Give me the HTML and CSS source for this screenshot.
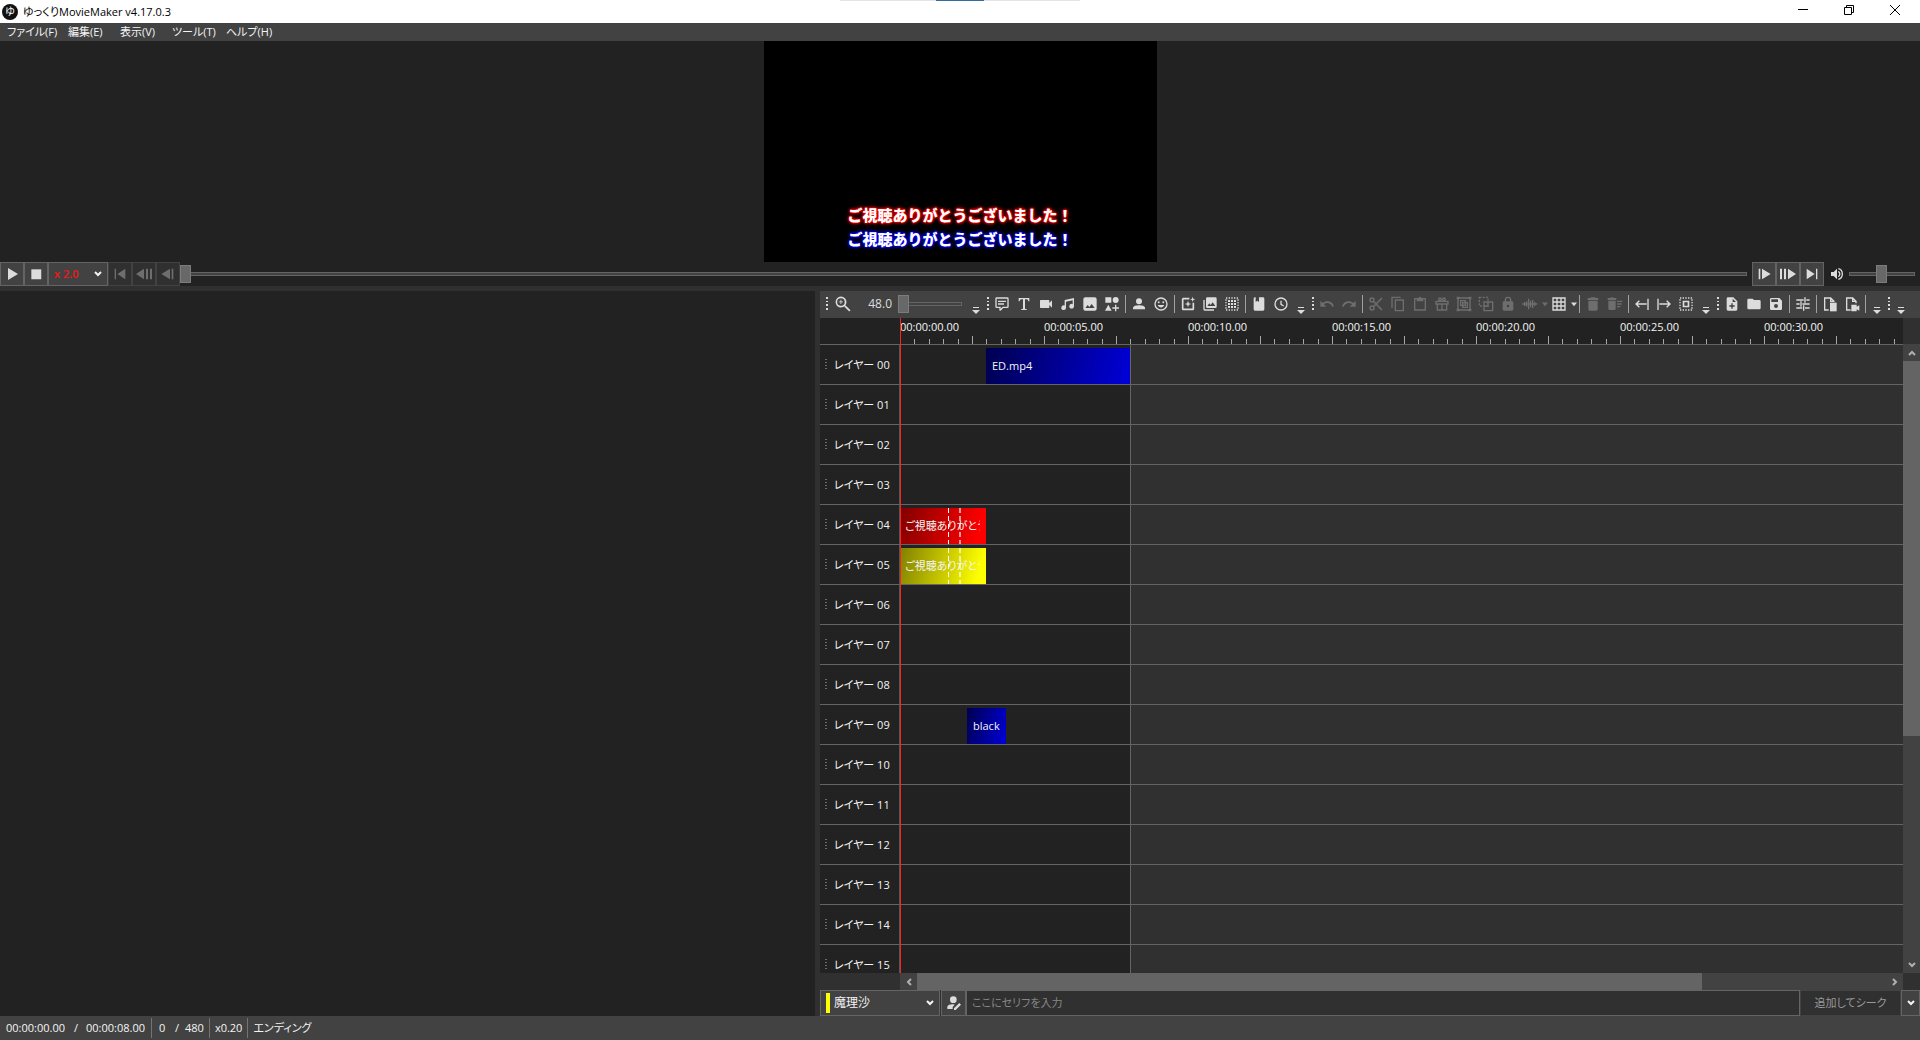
FILE: index.html
```html
<!DOCTYPE html>
<html lang="ja">
<head>
<meta charset="utf-8">
<title>ゆっくりMovieMaker v4.17.0.3</title>
<link rel="stylesheet" href="styles.css">
</head>
<body>
<svg class="defs" aria-hidden="true">
  <symbol id="i-down" viewBox="0 0 8 8"><path d="M1 2l3 3 3-3" fill="none" stroke="currentColor" stroke-width="2"/></symbol>
  <symbol id="i-more" viewBox="0 0 8 8"><path d="M1 0h6v1H1zM0 3h8L4 7z"/></symbol>
  <symbol id="i-grip" viewBox="0 0 4 16"><path d="M1 1h2v2H1zM1 5h2v1H1zM1 8h2v2H1zM1 12h2v2H1z"/></symbol>
  <symbol id="i-zoom" viewBox="0 0 24 24"><path d="M15.500 14L14.700 13.700A6.500 6.500 0 1 0 13.700 14.700L14 15.500L19.500 21L21 19.500ZM9.500 14A4.500 4.500 0 1 1 9.500 5A4.500 4.500 0 0 1 9.500 14ZM9 7v2H7v1h2v2h1v-2h2V9h-2V7z" fill-rule="evenodd"/></symbol>
  <symbol id="i-chat" viewBox="0 0 24 24"><path d="M9 22a1 1 0 0 1-1-1v-3H4a2 2 0 0 1-2-2V4a2 2 0 0 1 2-2h16a2 2 0 0 1 2 2v12a2 2 0 0 1-2 2h-6l-4 4zM4 4v12h6v3l3-3h7V4zM6 7h12v2H6zM6 11h9v2H6z" fill-rule="evenodd"/></symbol>
  <symbol id="i-text" viewBox="0 0 24 24"><path d="M4 3h16v5h-1.500C18 5.500 17 5 13.500 5v13c0 1.500.5 2 3 2v1h-9v-1c2.500 0 3-.5 3-2V5C7 5 6 5.500 5.500 8H4z"/></symbol>
  <symbol id="i-video" viewBox="0 0 24 24"><path d="M17 10.500V7a1 1 0 0 0-1-1H4a1 1 0 0 0-1 1v10a1 1 0 0 0 1 1h12a1 1 0 0 0 1-1v-3.500l4 4v-11z"/></symbol>
  <symbol id="i-music" viewBox="0 0 24 24"><path d="M21 3v12.500a3.500 3.500 0 1 1-2-3.200V6.500L9 8.600v8.900a3.500 3.500 0 1 1-2-3.200V6z"/></symbol>
  <symbol id="i-image" viewBox="0 0 24 24"><path fill-rule="evenodd" d="M2 5a3 3 0 0 1 3-3h14a3 3 0 0 1 3 3v14a3 3 0 0 1-3 3H5a3 3 0 0 1-3-3zm3 13h14l-4.500-6-3.500 4.500-2.500-3z"/></symbol>
  <symbol id="i-shape" viewBox="0 0 24 24"><path d="M2 2h9v8H2zM17.500 1.500a4.500 4.500 0 1 1 0 9 4.500 4.500 0 0 1 0-9zM6.500 13l5 9h-10zM16.500 13h2v4h4v2h-4v4h-2v-4h-4v-2h4z"/></symbol>
  <symbol id="i-user" viewBox="0 0 24 24"><circle cx="12" cy="8" r="4.500"/><path d="M3 20v-2c0-3 5-4 9-4s9 1 9 4v2z"/></symbol>
  <symbol id="i-face" viewBox="0 0 24 24"><circle cx="12" cy="12" r="9" fill="none" stroke="currentColor" stroke-width="2"/><circle cx="8.500" cy="9.500" r="1.500"/><circle cx="15.500" cy="9.500" r="1.500"/><path d="M7 13.500h10c-2 5-8 5-10 0z"/></symbol>
  <symbol id="i-effect" viewBox="0 0 24 24"><path d="M14 4H5a1 1 0 0 0-1 1v14a1 1 0 0 0 1 1h14a1 1 0 0 0 1-1v-9" fill="none" stroke="currentColor" stroke-width="2.500"/><path d="M19 1l1 3 3 1-3 1-1 3-1-3-3-1 3-1zM12 7l1.300 3.700L17 12l-3.700 1.300L12 17l-1.300-3.700L7 12l3.700-1.300z"/></symbol>
  <symbol id="i-gallery" viewBox="0 0 24 24"><path fill-rule="evenodd" d="M8 2h12a2 2 0 0 1 2 2v12a2 2 0 0 1-2 2H8a2 2 0 0 1-2-2V4a2 2 0 0 1 2-2zm0 13h12l-4-5.500-3 4-2-2.500zM2 6h2v14h14v2H4a2 2 0 0 1-2-2z"/></symbol>
  <symbol id="i-select" viewBox="0 0 24 24"><path d="M3 3h18v18H3z" fill="none" stroke="currentColor" stroke-width="2" stroke-dasharray="2 2"/><path fill-rule="evenodd" d="M7 7h10v10H7zm2.500 2.500v5h5v-5z"/></symbol>
  <symbol id="i-frames" viewBox="0 0 24 24"><path d="M3 3h18v18H3z" fill="none" stroke="currentColor" stroke-width="2" stroke-dasharray="2 2"/><path d="M6 6h3v3H6zM10.500 6h3v3h-3zM15 6h3v3h-3zM6 10.500h3v3H6zM10.500 10.500h3v3h-3zM15 10.500h3v3h-3zM6 15h3v3H6zM10.500 15h3v3h-3zM15 15h3v3h-3z"/></symbol>
  <symbol id="i-book" viewBox="0 0 24 24"><path fill-rule="evenodd" d="M4 4a2 2 0 0 1 2-2h12a2 2 0 0 1 2 2v16a2 2 0 0 1-2 2H6a2 2 0 0 1-2-2zM7 2v7l2.500-2L12 9V2z"/></symbol>
  <symbol id="i-clock" viewBox="0 0 24 24"><path d="M12 3a9 9 0 1 1 0 18 9 9 0 0 1 0-18zM12 7v5.500l4 2.500" fill="none" stroke="currentColor" stroke-width="2"/></symbol>
  <symbol id="i-undo" viewBox="0 0 24 24"><path d="M12.500 8c-2.600 0-5 1-6.900 2.600L2 7v9h9l-3.600-3.600A8 8 0 0 1 20 16l2.400-.8A10.500 10.500 0 0 0 12.500 8z"/></symbol>
  <symbol id="i-cut" viewBox="0 0 24 24"><g fill="none" stroke="currentColor" stroke-width="2.200"><circle cx="6" cy="6" r="3"/><circle cx="6" cy="18" r="3"/><path d="M8 8l13 13M8 16L21 3"/></g></symbol>
  <symbol id="i-copy" viewBox="0 0 24 24"><path d="M8 6h12v16H8zM3 18V2h13" fill="none" stroke="currentColor" stroke-width="2"/></symbol>
  <symbol id="i-paste" viewBox="0 0 24 24"><path d="M4 4h16v17H4z" fill="none" stroke="currentColor" stroke-width="2"/><path d="M7 3h3a2 2 0 0 1 4 0h3v5H7z"/></symbol>
  <symbol id="i-gift" viewBox="0 0 24 24"><path d="M3 8h18v4H3zM5 12v9h14v-9M12 12v9" fill="none" stroke="currentColor" stroke-width="2"/><circle cx="9" cy="5" r="2" fill="none" stroke="currentColor" stroke-width="2"/><circle cx="15" cy="5" r="2" fill="none" stroke="currentColor" stroke-width="2"/></symbol>
  <symbol id="i-group" viewBox="0 0 24 24"><path d="M3 3h18v18H3zM7 7h7v7H7zM10 10h7v7h-7z" fill="none" stroke="currentColor" stroke-width="2"/><path d="M1 1h4v4H1zM19 1h4v4h-4zM1 19h4v4H1zM19 19h4v4h-4z"/></symbol>
  <symbol id="i-ungroup" viewBox="0 0 24 24"><path d="M2 2h13v13H2z" fill="none" stroke="currentColor" stroke-width="2" stroke-dasharray="3 2"/><path d="M9 9h13v13H9zM9 9h6v6H9z" fill="none" stroke="currentColor" stroke-width="2"/></symbol>
  <symbol id="i-lock" viewBox="0 0 24 24"><path fill-rule="evenodd" d="M12 1a5 5 0 0 1 5 5v2h1a2 2 0 0 1 2 2v10a2 2 0 0 1-2 2H6a2 2 0 0 1-2-2V10a2 2 0 0 1 2-2h1V6a5 5 0 0 1 5-5zm0 2a3 3 0 0 0-3 3v2h6V6a3 3 0 0 0-3-3zm0 10a2 2 0 1 0 0 4 2 2 0 0 0 0-4z"/></symbol>
  <symbol id="i-wave" viewBox="0 0 24 24"><path d="M0 11h3v-2h2v2h1V8h2v3h1V4h2v7h1V7h2v4h1V6h2v5h1V9h2v2h3v2h-3v2h-2v-2h-1v5h-2v-5h-1v4h-2v-4h-1v7H9v-7H8v3H6v-3H5v2H3v-2H0z"/></symbol>
  <symbol id="i-caret" viewBox="0 0 8 8"><path d="M0 2h8L4 7z"/></symbol>
  <symbol id="i-grid" viewBox="0 0 24 24"><path d="M3 3h18v18H3zM9 3v18M15 3v18M3 9h18M3 15h18" fill="none" stroke="currentColor" stroke-width="2"/></symbol>
  <symbol id="i-trash" viewBox="0 0 24 24"><path d="M5 7h14v13a2 2 0 0 1-2 2H7a2 2 0 0 1-2-2zM4 3h4l1-1h6l1 1h4v3H4z"/></symbol>
  <symbol id="i-sweep" viewBox="0 0 24 24"><path d="M2 7h11v12a2 2 0 0 1-2 2H4a2 2 0 0 1-2-2zM1 3h4l1-1h3l1 1h4v3H1zM15 7h8v2h-8zM15 11h7v2h-7zM15 15h5v2h-5z"/></symbol>
  <symbol id="i-toleft" viewBox="0 0 24 24"><path d="M21 4v17M19 12H3M8 7l-5 5 5 5" fill="none" stroke="currentColor" stroke-width="2"/></symbol>
  <symbol id="i-newfile" viewBox="0 0 24 24"><path fill-rule="evenodd" d="M6 2h8l6 6v12a2 2 0 0 1-2 2H6a2 2 0 0 1-2-2V4a2 2 0 0 1 2-2zm7 2v5h5zM11 11v3H8v2h3v3h2v-3h3v-2h-3v-3z"/></symbol>
  <symbol id="i-folder" viewBox="0 0 24 24"><path d="M2 6a2 2 0 0 1 2-2h6l2 2h8a2 2 0 0 1 2 2v10a2 2 0 0 1-2 2H4a2 2 0 0 1-2-2z"/></symbol>
  <symbol id="i-save" viewBox="0 0 24 24"><path fill-rule="evenodd" d="M17 3H5a2 2 0 0 0-2 2v14a2 2 0 0 0 2 2h14a2 2 0 0 0 2-2V7zM5 5h10v4H5zm7 7a3 3 0 1 1 0 6 3 3 0 0 1 0-6z"/></symbol>
  <symbol id="i-tune" viewBox="0 0 24 24"><path d="M2 5h11v2H2zM17 5h5v2h-5zM14 2h2v8h-2zM2 11h5v2H2zM11 11h11v2H11zM8 8h2v8H8zM2 17h9v2H2zM15 17h7v2h-7zM12 14h2v8h-2z"/></symbol>
  <symbol id="i-filefilm" viewBox="0 0 24 24"><path d="M10 21H4V3h9l5 5v1M13 3v5h5" fill="none" stroke="currentColor" stroke-width="2"/><path d="M12 10h10v13H12z"/></symbol>
  <symbol id="i-filecam" viewBox="0 0 24 24"><path d="M10 21H4V3h9l5 5v3M13 3v5h5" fill="none" stroke="currentColor" stroke-width="2"/><path d="M11 13h8v3l4-2v8l-4-2v3h-8z"/></symbol>
  <symbol id="i-useredit" viewBox="0 0 24 24"><circle cx="11" cy="7" r="5"/><path d="M2 21v-3c0-3 5-4 9-4l2 .5L10 18v3zM12 20l8-8 2.500 2.500-8 8H12z"/></symbol>
  <symbol id="i-play" viewBox="0 0 24 24"><path d="M6 3v18l15-9z"/></symbol>
  <symbol id="i-stop" viewBox="0 0 24 24"><path d="M4 4h17v17H4z"/></symbol>
  <symbol id="i-first" viewBox="0 0 24 24"><path d="M4 4h2v16H4zM20 4v16L8 12z"/></symbol>
  <symbol id="i-step" viewBox="0 0 24 24"><path d="M4 4h2.500v16H4zM9 4v16l13-8z"/></symbol>
  <symbol id="i-step2" viewBox="0 0 24 24"><path d="M0 4h3v16H0zM6 4h3v16H6zM12 4v16l12-8z"/></symbol>
  <symbol id="i-sound" viewBox="0 0 24 24"><path d="M3 9v6h4l5 5V4L7 9z"/><path d="M14 8c3 2 3 6 0 8M14 4c8 2 8 14 0 16" fill="none" stroke="currentColor" stroke-width="2"/></symbol>
</svg>

<div class="app">
  <header class="titlebar">
    <span class="logo">ゆ</span>
    <h1 class="title">ゆっくりMovieMaker v4.17.0.3</h1>
    <div class="capture"></div>
    <div class="window-buttons">
      <button aria-label="最小化"><svg viewBox="0 0 10 10"><path d="M0 4.500h10"/></svg></button>
      <button aria-label="元に戻す"><svg viewBox="0 0 10 10"><path d="M.5 2.500h7v7h-7zM2.500 2V.5h7v7H8"/></svg></button>
      <button aria-label="閉じる"><svg viewBox="0 0 10 10"><path d="M0 0l10 10M10 0L0 10"/></svg></button>
    </div>
  </header>

  <nav class="menubar">
    <button>ファイル(F)</button><button>編集(E)</button><button>表示(V)</button><button>ツール(T)</button><button>ヘルプ(H)</button>
  </nav>

  <section class="preview">
    <div class="screen">
      <p class="caption caption-red">ご視聴ありがとうございました！</p>
      <p class="caption caption-blue">ご視聴ありがとうございました！</p>
    </div>
  </section>

  <section class="player">
    <button class="pbtn" aria-label="再生"><svg class="ic"><use href="#i-play"/></svg></button>
    <button class="pbtn" aria-label="停止"><svg class="ic ic-s"><use href="#i-stop"/></svg></button>
    <div class="combo speed"><select aria-label="再生速度"><option>x 2.0</option></select><svg class="chev"><use href="#i-down"/></svg></div>
    <button class="pbtn" disabled aria-label="先頭へ"><svg class="ic"><use href="#i-first"/></svg></button>
    <button class="pbtn" disabled aria-label="大きく戻る"><svg class="ic flip"><use href="#i-step2"/></svg></button>
    <button class="pbtn" disabled aria-label="1フレーム戻る"><svg class="ic flip"><use href="#i-step"/></svg></button>
    <input class="seek" type="range" min="0" max="480" value="0" aria-label="再生位置">
    <button class="pbtn" aria-label="1フレーム進む"><svg class="ic"><use href="#i-step"/></svg></button>
    <button class="pbtn" aria-label="大きく進む"><svg class="ic"><use href="#i-step2"/></svg></button>
    <button class="pbtn" aria-label="末尾へ"><svg class="ic flip"><use href="#i-first"/></svg></button>
    <button class="mute" aria-label="音量"><svg class="ic"><use href="#i-sound"/></svg></button>
    <input class="volume" type="range" min="0" max="100" value="49" aria-label="音量">
  </section>

  <main class="workspace">
    <aside class="properties"></aside>
    <section class="editor">
      <div class="toolbar">
        <svg class="grip"><use href="#i-grip"/></svg>
        <button class="tool zoom" aria-label="拡大率"><svg class="ic ic-l"><use href="#i-zoom"/></svg></button>
        <span class="zoom-value">48.0</span>
        <input class="zoom-range" type="range" min="0" max="100" value="0" aria-label="拡大率">
        <svg class="more"><use href="#i-more"/></svg>
        <svg class="grip"><use href="#i-grip"/></svg>
        <button class="tool" aria-label="セリフ"><svg class="ic"><use href="#i-chat"/></svg></button>
        <button class="tool" aria-label="テキスト"><svg class="ic"><use href="#i-text"/></svg></button>
        <button class="tool" aria-label="動画"><svg class="ic"><use href="#i-video"/></svg></button>
        <button class="tool" aria-label="音声"><svg class="ic"><use href="#i-music"/></svg></button>
        <button class="tool" aria-label="画像"><svg class="ic"><use href="#i-image"/></svg></button>
        <button class="tool" aria-label="図形"><svg class="ic"><use href="#i-shape"/></svg></button>
        <i class="sep"></i>
        <button class="tool" aria-label="立ち絵"><svg class="ic"><use href="#i-user"/></svg></button>
        <button class="tool" aria-label="表情"><svg class="ic"><use href="#i-face"/></svg></button>
        <i class="sep"></i>
        <button class="tool" aria-label="エフェクト"><svg class="ic"><use href="#i-effect"/></svg></button>
        <button class="tool" aria-label="画面の複製"><svg class="ic"><use href="#i-gallery"/></svg></button>
        <button class="tool" aria-label="グループ制御"><svg class="ic"><use href="#i-frames"/></svg></button>
        <i class="sep"></i>
        <button class="tool" aria-label="テンプレート"><svg class="ic"><use href="#i-book"/></svg></button>
        <button class="tool" aria-label="履歴"><svg class="ic"><use href="#i-clock"/></svg></button>
        <svg class="more"><use href="#i-more"/></svg>
        <svg class="grip"><use href="#i-grip"/></svg>
        <button class="tool" disabled aria-label="元に戻す"><svg class="ic"><use href="#i-undo"/></svg></button>
        <button class="tool" disabled aria-label="やり直す"><svg class="ic flip"><use href="#i-undo"/></svg></button>
        <i class="sep"></i>
        <button class="tool" disabled aria-label="切り取り"><svg class="ic"><use href="#i-cut"/></svg></button>
        <button class="tool" disabled aria-label="コピー"><svg class="ic"><use href="#i-copy"/></svg></button>
        <button class="tool" disabled aria-label="貼り付け"><svg class="ic"><use href="#i-paste"/></svg></button>
        <button class="tool" disabled aria-label="分割"><svg class="ic"><use href="#i-gift"/></svg></button>
        <button class="tool" disabled aria-label="グループ化"><svg class="ic"><use href="#i-group"/></svg></button>
        <button class="tool" disabled aria-label="グループ解除"><svg class="ic"><use href="#i-ungroup"/></svg></button>
        <button class="tool" disabled aria-label="ロック"><svg class="ic"><use href="#i-lock"/></svg></button>
        <button class="tool" disabled aria-label="波形"><svg class="ic"><use href="#i-wave"/></svg></button>
        <button class="drop" disabled aria-label="波形の設定"><svg class="caret"><use href="#i-caret"/></svg></button>
        <button class="tool" aria-label="グリッド"><svg class="ic"><use href="#i-grid"/></svg></button>
        <button class="drop" aria-label="グリッドの設定"><svg class="caret"><use href="#i-caret"/></svg></button>
        <i class="sep"></i>
        <button class="tool" disabled aria-label="削除"><svg class="ic"><use href="#i-trash"/></svg></button>
        <button class="tool" disabled aria-label="詰めて削除"><svg class="ic"><use href="#i-sweep"/></svg></button>
        <i class="sep"></i>
        <button class="tool" aria-label="左を選択"><svg class="ic"><use href="#i-toleft"/></svg></button>
        <button class="tool" aria-label="右を選択"><svg class="ic flip"><use href="#i-toleft"/></svg></button>
        <button class="tool" aria-label="すべて選択"><svg class="ic"><use href="#i-select"/></svg></button>
        <svg class="more"><use href="#i-more"/></svg>
        <svg class="grip"><use href="#i-grip"/></svg>
        <button class="tool" aria-label="新規作成"><svg class="ic"><use href="#i-newfile"/></svg></button>
        <button class="tool" aria-label="開く"><svg class="ic"><use href="#i-folder"/></svg></button>
        <button class="tool" aria-label="保存"><svg class="ic"><use href="#i-save"/></svg></button>
        <i class="sep"></i>
        <button class="tool" aria-label="設定"><svg class="ic"><use href="#i-tune"/></svg></button>
        <i class="sep"></i>
        <button class="tool" aria-label="台本読込"><svg class="ic"><use href="#i-filefilm"/></svg></button>
        <button class="tool" aria-label="動画出力"><svg class="ic"><use href="#i-filecam"/></svg></button>
        <i class="sep"></i>
        <svg class="more"><use href="#i-more"/></svg>
        <svg class="grip"><use href="#i-grip"/></svg>
        <svg class="more"><use href="#i-more"/></svg>
      </div>

      <div class="timeline">
        <div class="tracks">
          <div class="ruler">
            <div class="scale">
              <svg class="ticks" aria-hidden="true">
                <defs><pattern id="tick" width="72" height="8" patternUnits="userSpaceOnUse"><path d="M0 0h1v8H0zM14 3h1v5h-1zM29 3h1v5h-1zM43 3h1v5h-1zM58 3h1v5h-1z" fill="#a8a8a8"/></pattern></defs>
                <rect width="100%" height="8" fill="url(#tick)"/>
              </svg>
              <span>00:00:00.00</span><span>00:00:05.00</span><span>00:00:10.00</span><span>00:00:15.00</span><span>00:00:20.00</span><span>00:00:25.00</span><span>00:00:30.00</span>
            </div>
          </div>
          <div class="layers">
            <div class="layer"><div class="layer-name">レイヤー 00</div><div class="lane"><div class="clip blue" style="margin-left:86px;width:144px">ED.mp4</div></div></div>
            <div class="layer"><div class="layer-name">レイヤー 01</div><div class="lane"></div></div>
            <div class="layer"><div class="layer-name">レイヤー 02</div><div class="lane"></div></div>
            <div class="layer"><div class="layer-name">レイヤー 03</div><div class="lane"></div></div>
            <div class="layer"><div class="layer-name">レイヤー 04</div><div class="lane"><div class="clip red keyed" style="margin-left:0px;width:86px"><span>ご視聴ありがとうございました！</span></div></div></div>
            <div class="layer"><div class="layer-name">レイヤー 05</div><div class="lane"><div class="clip yellow keyed" style="margin-left:0px;width:86px"><span>ご視聴ありがとうございました！</span></div></div></div>
            <div class="layer"><div class="layer-name">レイヤー 06</div><div class="lane"></div></div>
            <div class="layer"><div class="layer-name">レイヤー 07</div><div class="lane"></div></div>
            <div class="layer"><div class="layer-name">レイヤー 08</div><div class="lane"></div></div>
            <div class="layer"><div class="layer-name">レイヤー 09</div><div class="lane"><div class="clip blue" style="margin-left:67px;width:39px"><span>black.png</span></div></div></div>
            <div class="layer"><div class="layer-name">レイヤー 10</div><div class="lane"></div></div>
            <div class="layer"><div class="layer-name">レイヤー 11</div><div class="lane"></div></div>
            <div class="layer"><div class="layer-name">レイヤー 12</div><div class="lane"></div></div>
            <div class="layer"><div class="layer-name">レイヤー 13</div><div class="lane"></div></div>
            <div class="layer"><div class="layer-name">レイヤー 14</div><div class="lane"></div></div>
            <div class="layer"><div class="layer-name">レイヤー 15</div><div class="lane"></div></div>
          </div>
          <div class="playhead"></div>
        </div>
        <div class="vscroll">
          <button aria-label="上へ"><svg class="chev up"><use href="#i-down"/></svg></button>
          <div class="vtrack"><div class="vthumb"></div></div>
          <button aria-label="下へ"><svg class="chev"><use href="#i-down"/></svg></button>
        </div>
      </div>
      <div class="hscroll">
        <button aria-label="左へ"><svg class="chev left"><use href="#i-down"/></svg></button>
        <div class="htrack"><div class="hthumb"></div></div>
        <button aria-label="右へ"><svg class="chev right"><use href="#i-down"/></svg></button>
      </div>

      <form class="serif">
        <div class="combo voice"><i class="mark"></i><select aria-label="キャラクター"><option>魔理沙</option></select><svg class="chev"><use href="#i-down"/></svg></div>
        <button type="button" class="voice-edit" aria-label="キャラクター編集"><svg class="ic"><use href="#i-useredit"/></svg></button>
        <input class="line" type="text" placeholder="ここにセリフを入力" aria-label="セリフ">
        <button type="button" class="add" disabled>追加してシーク</button>
        <button type="button" class="add-menu" aria-label="追加方法"><svg class="chev"><use href="#i-down"/></svg></button>
      </form>
    </section>
  </main>

  <footer class="status">
    <span class="time">00:00:00.00</span><span class="slash wide">/</span><span class="time">00:00:08.00</span>
    <i class="bar"></i>
    <span class="frame">0</span><span class="slash">/</span><span>480</span>
    <i class="bar"></i>
    <span>x0.20</span>
    <i class="bar"></i>
    <span>エンディング</span>
  </footer>
</div>
</body>
</html>
```
FILE: styles.css
```css
:root {
  --dark: #222222;
  --panel: #303030;
  --bar: #424242;
  --line: #646464;
  --text: #f4f4f4;
  --icon: #dcdcdc;
  --off: #6e6e6e;
}

* { box-sizing: border-box; }

body {
  margin: 0;
  background: var(--dark);
  color: var(--text);
  font: 11px/16px "Open Sans", "Noto Sans CJK JP", sans-serif;
  font-feature-settings: "palt";
}

button, input, select {
  margin: 0;
  padding: 0;
  border: 0;
  border-radius: 0;
  background: none;
  color: inherit;
  font: inherit;
  font-feature-settings: inherit;
  outline: none;
}

button { display: flex; align-items: center; justify-content: center; flex: none; }
svg { display: block; fill: currentColor; flex: none; overflow: visible; }
.defs { position: absolute; width: 0; height: 0; }
.ic { width: 16px; height: 16px; }
.ic-s { width: 14px; height: 14px; }
.ic-l { width: 20px; height: 20px; }
.chev { width: 8px; height: 8px; }
.flip { transform: scaleX(-1); }
.up { transform: rotate(180deg); }
.left { transform: rotate(90deg); }
.right { transform: rotate(-90deg); }

.app { display: flex; flex-direction: column; height: 100vh; overflow: hidden; }

/* title bar */
.titlebar { position: relative; display: flex; align-items: center; height: 23px; flex: none; padding: 0 2px; background: #fff; color: #000; }
.logo { width: 16px; height: 16px; margin-right: 5px; border-radius: 50%; background: #111; color: #fff; font-size: 10px; line-height: 15px; text-align: center; }
.title { margin: 0; font-size: 11px; font-weight: 400; }
.capture { position: absolute; top: 0; left: 50%; width: 240px; height: 1px; margin-left: -120px; background: linear-gradient(90deg, #e4e4e4 96px, #2f6ea5 96px 144px, #e4e4e4 144px); }
.window-buttons { display: flex; margin-left: auto; align-self: flex-start; }
.window-buttons button { width: 46px; height: 20px; }
.window-buttons svg { width: 10px; height: 10px; fill: none; stroke: #000; stroke-width: 1; }

.menubar { display: grid; grid-template-columns: 61px 52px 52px 54px auto; justify-content: start; flex: none; height: 18px; padding-left: 7px; background: var(--bar); }
.menubar button { justify-content: flex-start; white-space: nowrap; }

/* preview */
.preview { flex: none; display: flex; justify-content: center; }
.screen { display: flex; flex-direction: column; justify-content: flex-end; align-items: center; width: 393px; aspect-ratio: 393 / 221; padding-bottom: 11px; background: #000; }
.caption { margin: 0; font: 900 15px/24px "Noto Sans CJK JP", sans-serif; font-feature-settings: normal; color: #fff; white-space: nowrap; }
.caption-red { text-shadow: 0 0 2px #f00, 0 0 2px #f00, 0 0 3px #f00, 0 0 4px #f00; }
.caption-blue { text-shadow: 0 0 2px #00f, 0 0 2px #00f, 0 0 3px #00f, 0 0 4px #00f; }

/* player */
.player { display: flex; align-items: center; flex: none; height: 24px; }
.pbtn { width: 24px; height: 24px; border: 1px solid var(--line); background: var(--bar); color: var(--icon); }
.pbtn:disabled { border-color: var(--bar); background: var(--panel); color: var(--off); }
.combo { position: relative; display: flex; align-items: center; border: 1px solid var(--line); background: var(--bar); }
.combo select { flex: 1; width: 100%; height: 100%; appearance: none; }
.combo .chev { position: absolute; right: 5px; pointer-events: none; }
.speed { width: 60px; height: 24px; color: var(--text); }
.speed select { padding-left: 5px; color: #f01818; font-weight: 600; }
.mute { width: 25px; height: 24px; color: var(--icon); }

input[type="range"] { appearance: none; height: 20px; background: linear-gradient(var(--line), var(--line)) center / 100% 4px no-repeat; }
input[type="range"]::-webkit-slider-thumb { appearance: none; width: 11px; height: 18px; border: 1px solid #7c7c7c; background: #686868; }
input[type="range"]::-webkit-slider-runnable-track { height: 18px; background: linear-gradient(var(--bar), var(--bar)) center / calc(100% - 2px) 2px no-repeat; }
.seek { flex: 1; min-width: 0; margin-right: 5px; }
.volume { width: 66px; margin-right: 5px; }

/* workspace */
.workspace { display: flex; flex: 1; min-height: 0; border-top: 5px solid var(--panel); }
.properties { flex: 1; min-width: 0; }
.editor { display: flex; flex-direction: column; flex: none; width: 1105px; min-width: 0; border-left: 5px solid var(--panel); background: var(--panel); }

.toolbar { display: flex; align-items: center; flex: none; height: 27px; padding: 0 0 1px 4px; background: var(--bar); color: var(--icon); }
.tool { width: 22px; height: 24px; }
.tool:disabled, .drop:disabled { color: var(--off); }
.drop { width: 7px; height: 24px; }
.caret { width: 6px; height: 6px; }
.grip { width: 4px; height: 16px; margin: 0 1px; }
.more { width: 8px; height: 8px; margin: 0 5px 2px 5px; align-self: flex-end; }
.sep { flex: none; width: 1px; height: 18px; margin: 0 2px; background: #a0a0a0; }
.zoom { margin-left: 2px; }
.zoom-value { width: 38px; font-size: 12px; text-align: right; }
.zoom-range { flex: none; width: 64px; height: 20px; margin: 0 5px 0 6px; }

.timeline { display: flex; flex: 1; min-height: 0; background: var(--panel); }
.tracks { position: relative; display: flex; flex-direction: column; flex: 1; min-width: 0; overflow: hidden; }
.ruler { flex: none; height: 27px; padding-left: 80px; border-bottom: 1px solid var(--line); background: var(--dark); }
.scale { position: relative; display: flex; height: 26px; overflow: hidden; }
.scale span { flex: none; width: 144px; line-height: 18px; }
.ticks { position: absolute; bottom: 0; left: 0; width: 100%; height: 8px; }
.layers { flex: 1; min-height: 0; overflow: hidden; }
.layer { display: flex; height: 40px; border-bottom: 1px solid var(--line); }
.layer-name { display: flex; align-items: center; gap: 7px; flex: none; width: 80px; padding-left: 5px; border-right: 1px solid #555; background: var(--dark); line-height: 38px; white-space: nowrap; }
.layer-name::before { content: ""; width: 2px; height: 11px; background: repeating-linear-gradient(var(--off) 0 1px, transparent 1px 3px); }
.lane { flex: none; width: 231px; padding-top: 3px; border-right: 1px solid var(--line); background: var(--dark); }
.clip { position: relative; height: 36px; padding: 0 6px; overflow: hidden; line-height: 36px; white-space: nowrap; }
.clip span { display: block; overflow: hidden; }
.blue { background: linear-gradient(105deg, #000050, #0000d8); }
.red { background: linear-gradient(105deg, #800000, #f00 90%); }
.yellow { background: linear-gradient(105deg, #808000, #ff0 90%); }
.keyed { padding-left: 5px; }
.keyed::before, .keyed::after { content: ""; position: absolute; top: 0; bottom: 0; left: 48px; width: 1px; background: repeating-linear-gradient(#fff 0 5px, transparent 5px 8px); }
.keyed::after { left: 59px; width: 2px; opacity: .6; }
.playhead { position: absolute; z-index: 1; top: 0; bottom: 0; left: 80px; width: 1px; background: #ff2020; }

.vscroll { display: flex; flex-direction: column; flex: none; width: 17px; margin-top: 26px; background: var(--bar); color: #b0b0b0; }
.vscroll button { height: 17px; }
.vtrack { flex: 1; min-height: 0; }
.vthumb { height: 63%; background: var(--line); }
.hscroll { display: flex; flex: none; height: 17px; margin: 0 17px 0 80px; background: var(--bar); color: #b0b0b0; }
.hscroll button { width: 17px; }
.htrack { flex: 1; }
.hthumb { width: 81%; height: 100%; background: var(--line); }

.serif { display: flex; flex: none; height: 26px; background: var(--panel); }
.voice { width: 120px; margin-right: 1px; padding: 2px 0 2px 5px; font-size: 12px; }
.mark { width: 4px; height: 20px; background: #ff0; }
.voice select { padding-left: 4px; }
.voice-edit { width: 25px; border: 1px solid var(--line); background: var(--bar); color: var(--icon); }
.line { flex: 1; min-width: 0; padding: 0 5px; border: 1px solid var(--line); }
.line::placeholder { color: #858585; opacity: 1; }
.add { width: 101px; border: 1px solid var(--bar); color: #999; white-space: nowrap; }
.add-menu { width: 19px; border: 1px solid var(--line); background: var(--bar); }

.status { display: flex; align-items: center; flex: none; height: 24px; padding-left: 6px; background: var(--bar); white-space: nowrap; }
.time { width: 60px; }
.slash { width: 16px; text-align: center; }
.slash.wide { width: 20px; }
.frame { width: 12px; padding-left: 2px; }
.bar { flex: none; width: 1px; height: 20px; margin: 0 5px; background: #747474; }
```
